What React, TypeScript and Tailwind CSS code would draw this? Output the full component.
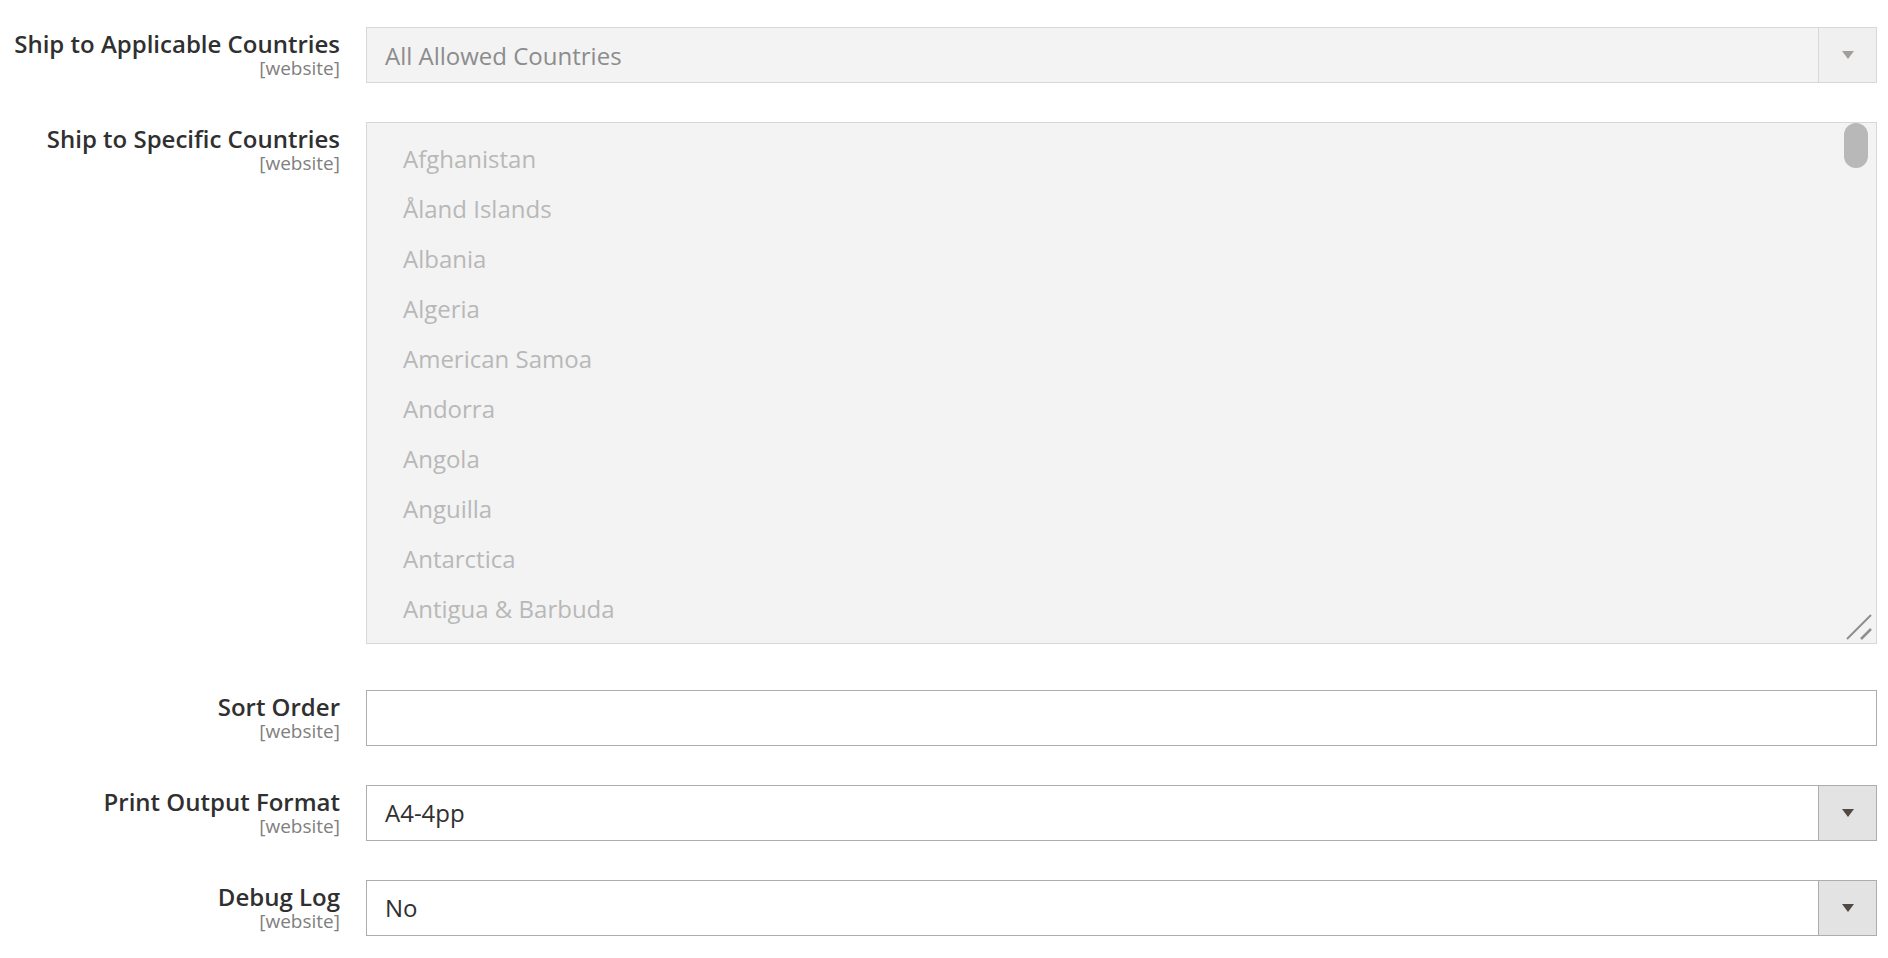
const COUNTRIES = [
  "Afghanistan",
  "Åland Islands",
  "Albania",
  "Algeria",
  "American Samoa",
  "Andorra",
  "Angola",
  "Anguilla",
  "Antarctica",
  "Antigua & Barbuda",
];

function FieldLabel({ title }: { title: string }) {
  return (
    <div className="w-[340px] shrink-0 text-right">
      <div className="pt-px text-[24px] leading-[31px] font-semibold text-[#303030]">{title}</div>
      <div className="text-[19px] leading-[19px] text-[#808080]">[website]</div>
    </div>
  );
}

function Select({ value, disabled }: { value: string; disabled?: boolean }) {
  return (
    <div
      className={
        disabled
          ? "flex h-[56px] flex-1 items-stretch border border-[#d8d8d8] bg-[#f3f3f3]"
          : "flex h-[56px] flex-1 items-stretch border border-[#adadad] bg-white"
      }
    >
      <div
        className={
          disabled
            ? "flex flex-1 items-center pt-[2px] pl-[18px] text-[24px] text-[#8c8c8c]"
            : "flex flex-1 items-center pl-[18px] text-[24px] text-[#303030]"
        }
      >
        {value}
      </div>
      <div
        className={
          disabled
            ? "flex w-[58px] items-center justify-center border-l border-[#d8d8d8] bg-[#f0f0f0]"
            : "flex w-[58px] items-center justify-center border-l border-[#adadad] bg-[#e3e3e3]"
        }
      >
        <div
          className={
            disabled
              ? "h-0 w-0 border-x-[6px] border-t-[8px] border-x-transparent border-t-[#a39e9b]"
              : "h-0 w-0 border-x-[6px] border-t-[8px] border-x-transparent border-t-[#514943]"
          }
        />
      </div>
    </div>
  );
}

export default function App() {
  return (
    <div className="min-h-screen w-full bg-white pt-[27px] pr-[11px] font-['Open_Sans',sans-serif]">
      <div className="flex flex-col gap-[39px]">
        {/* ship to applicable */}
        <div className="flex gap-[26px]">
          <FieldLabel title="Ship to Applicable Countries" />
          <Select value="All Allowed Countries" disabled />
        </div>

        {/* ship to specific */}
        <div className="flex gap-[26px]">
          <FieldLabel title="Ship to Specific Countries" />
          <div className="relative h-[522px] flex-1 overflow-hidden border border-[#d8d8d8] bg-[#f3f3f3]">
            <div className="flex flex-col pt-[11px] pl-[36px]">
              {COUNTRIES.map((c) => (
                <div key={c} className="flex h-[50px] items-center text-[24px] text-[#b8b8b8]">
                  {c}
                </div>
              ))}
            </div>
            <div className="absolute top-[0px] right-[8px] h-[45px] w-[24px] rounded-full bg-[#b8b8b8]" />
            <svg className="absolute right-[4px] bottom-[3px]" width="26" height="26" viewBox="0 0 26 26">
              <line x1="1" y1="25" x2="25" y2="1" stroke="#8f8f8f" strokeWidth="2" />
              <line x1="15" y1="25" x2="25" y2="15" stroke="#8f8f8f" strokeWidth="2.5" />
            </svg>
          </div>
        </div>

        {/* sort order */}
        <div className="mt-[7px] flex gap-[26px]">
          <FieldLabel title="Sort Order" />
          <div className="h-[56px] flex-1 border border-[#adadad] bg-white" />
        </div>

        <div className="flex gap-[26px]">
          <FieldLabel title="Print Output Format" />
          <Select value="A4-4pp" />
        </div>

        <div className="flex gap-[26px]">
          <FieldLabel title="Debug Log" />
          <Select value="No" />
        </div>
      </div>
    </div>
  );
}
